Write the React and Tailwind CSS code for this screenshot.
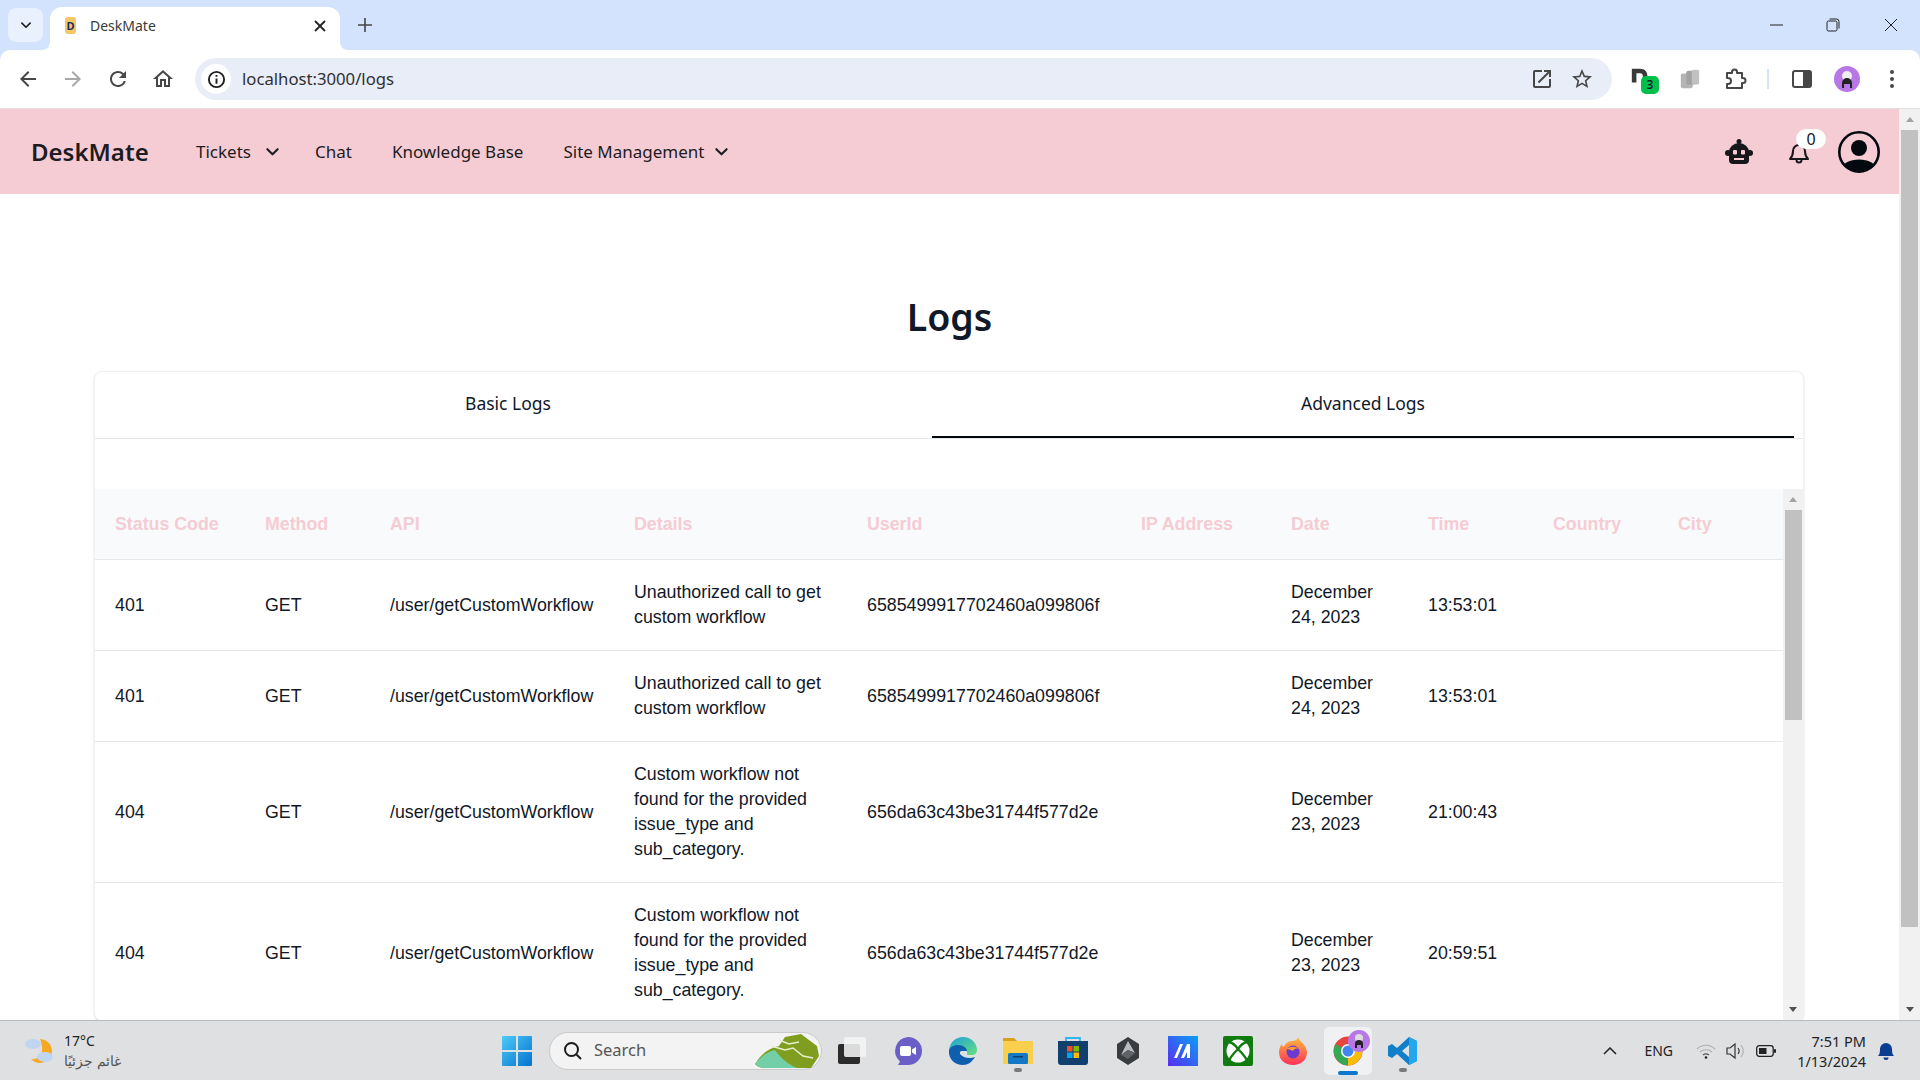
import React from "react";

const uiFont = "font-['Noto_Sans',sans-serif]";

const headers = [
  { label: "Status Code", w: "w-[150px]" },
  { label: "Method", w: "w-[125px]" },
  { label: "API", w: "w-[244px]" },
  { label: "Details", w: "w-[233px]" },
  { label: "UserId", w: "w-[274px]" },
  { label: "IP Address", w: "w-[150px]" },
  { label: "Date", w: "w-[137px]" },
  { label: "Time", w: "w-[125px]" },
  { label: "Country", w: "w-[125px]" },
  { label: "City", w: "w-[125px]" },
];

const notFound = "Custom workflow not found for the provided issue_type and sub_category.";
const unauth = "Unauthorized call to get custom workflow";

const logs = [
  { code: 401, details: unauth, user: "6585499917702460a099806f", date: "December 24, 2023", time: "13:53:01" },
  { code: 401, details: unauth, user: "6585499917702460a099806f", date: "December 24, 2023", time: "13:53:01" },
  { code: 404, details: notFound, user: "656da63c43be31744f577d2e", date: "December 23, 2023", time: "21:00:43" },
  { code: 404, details: notFound, user: "656da63c43be31744f577d2e", date: "December 23, 2023", time: "20:59:51" },
];

// Chrome toolbar glyphs
const Glyph = ({ d, className = "w-6 h-6 text-[#474747]" }) => (
  <svg viewBox="0 0 24 24" fill="currentColor" className={className}>
    <path d={d} />
  </svg>
);

const Chevron = ({ className }) => (
  <svg viewBox="0 0 16 16" fill="none" stroke="currentColor" strokeWidth="2.2" strokeLinecap="round" strokeLinejoin="round" className={className}>
    <path d="M2.500 5.500 8 11l5.500-5.500" />
  </svg>
);

const TabStrip = () => (
  <div className={`h-[50px] bg-[#d3e3fd] flex items-end pl-2 relative ${uiFont}`}>
    <div className="w-[35px] h-[34px] mb-2 rounded-lg bg-[#e9f0fe] flex items-center justify-center">
      <Chevron className="w-3 h-3 text-[#1f1f1f]" />
    </div>
    <div className="relative ml-[7px] w-[290px] h-[43px] bg-white rounded-t-xl flex items-center pl-[15px] pr-3 pb-[6px]">
      <svg viewBox="0 0 8 8" className="absolute -left-2 bottom-0 w-2 h-2"><path d="M8 0v8H0c4.400 0 8-3.600 8-8z" fill="#fff" /></svg>
      <svg viewBox="0 0 8 8" className="absolute -right-2 bottom-0 w-2 h-2"><path d="M0 0v8h8C3.600 8 0 4.400 0 0z" fill="#fff" /></svg>
      <span className="w-[11px] h-[17px] rounded-[3px] bg-[#f6c667] flex items-center justify-center text-[11px] leading-none font-bold text-[#1d2f5f]">D</span>
      <span className="ml-[14px] text-[14px] text-[#3a3a3a]">DeskMate</span>
      <svg viewBox="0 0 12 12" stroke="#222" strokeWidth="1.800" className="ml-auto mr-[2px] w-3 h-3"><path d="M1 1l10 10M11 1 1 11" /></svg>
    </div>
    <svg viewBox="0 0 14 14" stroke="#444" strokeWidth="1.600" className="w-[14px] h-[14px] ml-[18px] mb-[18px]"><path d="M7 0v14M0 7h14" /></svg>
    <div className="ml-auto flex items-center h-full pr-[22px] text-[#222]">
      <svg viewBox="0 0 14 14" stroke="currentColor" className="w-[14px] h-[14px]"><path d="M0 7h13" /></svg>
      <svg viewBox="0 0 14 14" fill="none" stroke="currentColor" className="w-[14px] h-[14px] ml-[42px]"><rect x="1" y="3" width="10" height="10" rx="1.500" /><path d="M3.500 1h7a2.500 2.500 0 0 1 2.500 2.500v7" /></svg>
      <svg viewBox="0 0 14 14" stroke="currentColor" className="w-[14px] h-[14px] ml-[44px]"><path d="M1 1l12 12M13 1 1 13" /></svg>
    </div>
  </div>
);

const Toolbar = () => (
  <div className="bg-[#d3e3fd]">
    <div className={`h-[59px] bg-white rounded-t-[10px] border-b border-[#e0e0e0] flex items-center ${uiFont}`}>
      <div className="flex items-center gap-[21px] pl-4">
        <Glyph d="M20 11H7.830l5.590-5.590L12 4l-8 8 8 8 1.410-1.410L7.830 13H20v-2z" />
        <Glyph d="M20 11H7.830l5.590-5.590L12 4l-8 8 8 8 1.410-1.410L7.830 13H20v-2z" className="w-6 h-6 text-[#a8a8a8] rotate-180" />
        <Glyph d="M17.650 6.350A7.958 7.958 0 0 0 12 4c-4.420 0-7.990 3.580-7.990 8s3.570 8 7.990 8c3.730 0 6.840-2.550 7.730-6h-2.080A5.990 5.990 0 0 1 12 18c-3.310 0-6-2.690-6-6s2.690-6 6-6c1.660 0 3.140.69 4.220 1.780L13 11h7V4l-2.350 2.350z" />
        <Glyph d="M12 5.690l5 4.500V18h-2v-6H9v6H7v-7.810l5-4.500M12 3L2 12h3v8h6v-6h2v6h6v-8h3L12 3z" />
      </div>
      <div className="ml-[20px] w-[1417px] h-[42px] rounded-full bg-[#e9edf7] flex items-center pl-[6px] pr-[18px]">
        <div className="w-[30px] h-[30px] rounded-full bg-white flex items-center justify-center">
          <svg viewBox="0 0 20 20" className="w-[19px] h-[19px]" fill="none" stroke="#1f1f1f" strokeWidth="2"><circle cx="10" cy="10" r="8" /><path d="M10 9v5.500M10 5.200v2" /></svg>
        </div>
        <span className="ml-[11px] text-[16.700px] text-[#2f3033]">localhost:3000/logs</span>
        <Glyph d="M19 19H5V5h7V3H5c-1.110 0-2 .9-2 2v14c0 1.100.89 2 2 2h14c1.100 0 2-.9 2-2v-7h-2v7zM14 3v2h3.590l-9.830 9.830 1.410 1.410L19 6.410V10h2V3h-7z" className="ml-auto w-6 h-6 text-[#474747]" />
        <Glyph d="M22 9.240l-7.190-.62L12 2 9.190 8.630 2 9.240l5.460 4.730L5.820 21 12 17.270 18.180 21l-1.630-7.030L22 9.240zM12 15.400l-3.760 2.270 1-4.280-3.320-2.880 4.380-.38L12 6.100l1.710 4.040 4.380.38-3.320 2.880 1 4.280L12 15.400z" className="ml-4 w-6 h-6 text-[#474747]" />
      </div>
      <div className="flex items-center pl-[18px]">
        <div className="relative w-[26px] h-[26px]">
          <svg viewBox="0 0 24 24" className="w-[22px] h-[22px]"><path d="M2 3h9c5 0 8 3 8 8v2h-5v-2c0-2-1-3-3-3H7v10H2z" fill="#3a3a3a" /></svg>
          <span className="absolute left-[11px] top-[10px] w-[18px] h-[18px] rounded-[5px] bg-[#00c04b] text-[12px] leading-[18px] text-center font-semibold text-[#123]">3</span>
        </div>
        <svg viewBox="0 0 24 24" className="ml-[23px] w-[22px] h-[22px]" fill="#b4b4b4"><rect x="2" y="6" width="13" height="16" rx="2" /><rect x="8" y="3" width="10" height="15" rx="2" fill="#a2a2a2" /><rect x="14" y="2" width="8" height="16" rx="2" fill="#c0c0c0" /></svg>
        <svg viewBox="0 0 24 24" fill="none" stroke="#474747" strokeWidth="2" strokeLinejoin="round" className="ml-[22px] w-6 h-6"><path d="M4 6h5V5a2.500 2.500 0 0 1 5 0v1h5v5h1a2.500 2.500 0 0 1 0 5h-1v5H4v-4h1a3 3 0 0 0 0-6H4z" /></svg>
        <div className="ml-[20px] w-[2px] h-[20px] bg-[#d3e3fd]" />
        <svg viewBox="0 0 24 24" className="ml-[21px] w-[24px] h-[24px]"><rect x="3" y="4" width="18" height="16" rx="2" fill="none" stroke="#474747" strokeWidth="2" /><path d="M13 4h6a2 2 0 0 1 2 2v12a2 2 0 0 1-2 2h-6z" fill="#474747" /></svg>
        <svg viewBox="0 0 26 26" className="ml-[20px] w-[26px] h-[26px]"><circle cx="13" cy="13" r="13" fill="#b877e6" /><circle cx="13" cy="10" r="5" fill="#eee" /><path d="M8 22v-5a5 5 0 0 1 10 0v5h-2v-4h-6v4z" fill="#222" /></svg>
        <svg viewBox="0 0 4 18" className="ml-[30px] w-[4px] h-[18px]" fill="#474747"><circle cx="2" cy="2" r="2" /><circle cx="2" cy="9" r="2" /><circle cx="2" cy="16" r="2" /></svg>
      </div>
    </div>
  </div>
);

const Navbar = () => (
  <nav className={`h-[85px] shrink-0 bg-[#f5ccd4] flex items-center pl-[31px] pr-[19px] text-[#1c1c22] ${uiFont}`}>
    <span className="text-[24px] font-semibold w-[165px]">DeskMate</span>
    <div className="flex items-center gap-[40px] text-[17px]">
      <span className="flex items-center gap-[14px] -mr-[5px]">Tickets <Chevron className="w-[15px] h-[15px]" /></span>
      <span>Chat</span>
      <span>Knowledge Base</span>
      <span className="flex items-center gap-[10px]">Site Management <Chevron className="w-[15px] h-[15px]" /></span>
    </div>
    <div className="ml-auto flex items-center">
      <svg viewBox="0 0 28 26" className="w-[28px] h-[26px]" fill="#17171b">
        <circle cx="14" cy="2.500" r="2.500" />
        <path d="M4 13a10 9 0 0 1 20 0v8a4 4 0 0 1-4 4H8a4 4 0 0 1-4-4z" />
        <circle cx="3" cy="14" r="3" />
        <circle cx="25" cy="14" r="3" />
        <rect x="8" y="11" width="4" height="4.500" rx="1" fill="#f5ccd4" />
        <rect x="16" y="11" width="4" height="4.500" rx="1" fill="#f5ccd4" />
        <rect x="9" y="19" width="10" height="2" fill="#f5ccd4" />
      </svg>
      <div className="relative ml-[36px] w-[20px] h-[28px] mt-[3px]">
        <svg viewBox="0 0 20 26" className="w-[20px] h-[26px]" fill="none" stroke="#17171b" strokeWidth="2" strokeLinejoin="round">
          <path d="M1 20c2-2 3-4 3-8a6 6 0 0 1 12 0c0 4 1 6 3 8z" />
          <path d="M7.500 21a2.500 2.500 0 0 0 5 0" />
        </svg>
        <span className="absolute left-[7px] -top-[10px] w-[30px] h-[20px] rounded-full bg-white text-[16px] leading-[20px] text-center text-[#111827]">0</span>
      </div>
      <svg viewBox="0 0 42 42" className="ml-[29px] w-[42px] h-[42px]">
        <defs>
          <clipPath id="userDisc"><circle cx="21" cy="21" r="19" /></clipPath>
        </defs>
        <circle cx="21" cy="21" r="19.700" fill="none" stroke="#03090f" strokeWidth="2.600" />
        <circle cx="21" cy="17" r="8" fill="#03090f" />
        <ellipse cx="21" cy="38" rx="17" ry="9.500" fill="#03090f" clipPath="url(#userDisc)" />
      </svg>
    </div>
  </nav>
);

const Track = ({ thumb, className = "" }) => (
  <div className={`bg-[#f1f1f1] flex flex-col items-center shrink-0 ${className}`}>
    <div className="h-[21px] flex items-center justify-center shrink-0">
      <div className="w-0 h-0 border-x-[4px] border-x-transparent border-b-[5px] border-b-[#a3a3a3]" />
    </div>
    <div className={`${thumb} bg-[#c1c1c1] shrink-0`} />
    <div className="mt-auto h-[21px] flex items-center justify-center shrink-0">
      <div className="w-0 h-0 border-x-[4px] border-x-transparent border-t-[5px] border-t-[#505050]" />
    </div>
  </div>
);

const LogsTable = () => (
  <div className="flex h-[531px] overflow-hidden">
    <table className="w-[1688px] shrink-0 table-fixed self-start border-collapse font-['Liberation_Sans',Arial,sans-serif] text-[17.800px] leading-[25px] text-[#111827]">
      <colgroup>
        {headers.map((h) => <col key={h.label} className={h.w} />)}
      </colgroup>
      <thead className="bg-[#f9fafb] border-b border-[#e5e7eb]">
        <tr>
          {headers.map((h) => (
            <th key={h.label} className="px-5 py-[22.500px] text-left font-bold text-[#f5ccd4]">{h.label}</th>
          ))}
        </tr>
      </thead>
      <tbody>
        {logs.map((row, i) => (
          <tr key={i} className="border-b border-[#e5e7eb]">
            <td className="px-5 py-5">{row.code}</td>
            <td className="px-5 py-5">GET</td>
            <td className="px-5 py-5">/user/getCustomWorkflow</td>
            <td className="px-5 py-5">{row.details}</td>
            <td className="px-5 py-5">{row.user}</td>
            <td className="px-5 py-5"></td>
            <td className="px-5 py-5">{row.date}</td>
            <td className="px-5 py-5">{row.time}</td>
            <td className="px-5 py-5"></td>
            <td className="px-5 py-5"></td>
          </tr>
        ))}
      </tbody>
    </table>
    <Track className="w-[20px] h-full" thumb="w-[17px] h-[210px]" />
  </div>
);

const Page = () => (
  <div className="flex-1 min-h-0 flex overflow-hidden">
    <div className="w-[1899px] shrink-0 flex flex-col bg-white">
      <Navbar />
      <main>
        <h1 className={`mt-[98px] h-[50px] leading-[50px] text-center text-[37.500px] font-semibold text-[#111827] ${uiFont}`}>Logs</h1>
        <div className="ml-[94px] mt-[29px] w-[1710px] rounded-lg border border-[#f1f1f1] shadow-sm bg-white">
          <div className={`flex gap-[11px] h-[67px] border-b border-[#e5e7eb] text-[17.500px] text-[#111827] ${uiFont}`}>
            <div className="w-[826px] flex items-center justify-center pb-1">Basic Logs</div>
            <div className="w-[862px] flex items-center justify-center border-b-2 border-[#03090f] pb-[2px]">Advanced Logs</div>
          </div>
          <div className="h-[50px]" />
          <LogsTable />
        </div>
      </main>
    </div>
    <Track className="w-[21px]" thumb="w-[17px] h-[797px]" />
  </div>
);

// Taskbar app icons, all drawn in a 30x30 box
const Icon = ({ children, className = "" }) => (
  <svg viewBox="0 0 30 30" className={`w-[30px] h-[30px] shrink-0 ${className}`}>{children}</svg>
);

const Dot = () => <span className="absolute left-[11px] -bottom-[6px] w-2 h-[4px] rounded-full bg-[#7a7a7a]" />;

const TaskApps = () => (
  <div className="flex items-center gap-[25px] ml-[16px]">
    <Icon>
      <rect x="0" y="8" width="22" height="20" rx="2" fill="#2b2b2b" />
      <rect x="6" y="1" width="22" height="20" rx="2" fill="#f4f4f4" fillOpacity="0.88" />
    </Icon>
    <Icon>
      <path d="M15 1a14 14 0 0 1 0 28H5l2-3.500A14 14 0 0 1 15 1z" fill="#6b5fc7" />
      <rect x="7" y="10" width="11" height="10" rx="2" fill="#fff" />
      <path d="M19 13.500l4-2.500v8l-4-2.500z" fill="#fff" />
    </Icon>
    <Icon>
      <defs>
        <linearGradient id="edgeA" x1="0" y1="0" x2="1" y2="1"><stop offset="0" stopColor="#1e9fdc" /><stop offset="1" stopColor="#66e07c" /></linearGradient>
      </defs>
      <path d="M1 14C2 6 8 1 15 1c8 0 14 6 14 13 0 3-2 5-5 5h-5c1-3-1-7-6-7-6 0-11 1-12 2z" fill="url(#edgeA)" />
      <path d="M1 14c2-4 6-5 9-5 5 0 9 3 9 6h-5c-2 0-3 2-1 4 3 3 9 4 14 2-3 5-7 8-12 8C7 29 0 23 1 14z" fill="#0f5fb0" />
    </Icon>
    <div className="relative">
      <Icon>
        <path d="M0 2h11l3 3h-14z" fill="#d9a21b" />
        <path d="M0 5h30v22a1 1 0 0 1-1 1H1a1 1 0 0 1-1-1z" fill="#fbcf4e" />
        <rect x="5" y="17" width="20" height="11" rx="1.500" fill="#1278c7" />
        <rect x="10" y="20" width="10" height="1.500" fill="#0b3f73" />
      </Icon>
      <Dot />
    </div>
    <Icon>
      <path d="M8 5V2h14v3" fill="none" stroke="#2fb6f0" strokeWidth="1.800" />
      <path d="M0 5h30v21a3 3 0 0 1-3 3H3a3 3 0 0 1-3-3z" fill="#11406f" />
      <rect x="9" y="10" width="5.500" height="5.500" fill="#f25022" />
      <rect x="15.500" y="10" width="5.500" height="5.500" fill="#7fba00" />
      <rect x="9" y="16.500" width="5.500" height="5.500" fill="#00a4ef" />
      <rect x="15.500" y="16.500" width="5.500" height="5.500" fill="#ffb900" />
    </Icon>
    <Icon>
      <path d="M15 1l11 7v14l-11 7-11-7V8z" fill="#3a3d40" />
      <path d="M15 5l7 12-7-3-7 5z" fill="#b8bcc0" />
      <path d="M8 19l7-5 7 3-7 6z" fill="#5f6266" />
    </Icon>
    <Icon>
      <defs>
        <linearGradient id="maBg" x1="0" y1="1" x2="1" y2="0"><stop offset="0" stopColor="#5a2cf0" /><stop offset="1" stopColor="#09a0f5" /></linearGradient>
      </defs>
      <rect width="30" height="30" fill="url(#maBg)" />
      <path d="M6 22l6-14h3l-6 14zM13 22l6-14h3v14h-3v-6l-3 6z" fill="#fff" />
    </Icon>
    <Icon>
      <rect width="30" height="30" rx="2" fill="#107c10" />
      <circle cx="15" cy="15" r="11.500" fill="#fff" />
      <path d="M6 6c4 1 7 4 9 7 2-3 5-6 9-7M6 25c1-4 5-8 9-12 4 4 8 8 9 12" fill="none" stroke="#107c10" strokeWidth="2.400" />
    </Icon>
    <Icon>
      <defs>
        <linearGradient id="fxA" x1="0.5" y1="0" x2="0.5" y2="1"><stop offset="0" stopColor="#ffbd3a" /><stop offset="1" stopColor="#ff2f5a" /></linearGradient>
      </defs>
      <path d="M20 1c1 4 8 7 9 15 0 8-6 13-14 13S1 24 1 16c0-3 1-6 3-8 0 2 1 3 2 3 1-4 5-6 8-6 3 0 5-1 6-4z" fill="url(#fxA)" />
      <circle cx="15" cy="16" r="6.500" fill="#6b3bd1" />
      <path d="M9 13c3-3 9-3 12 0-3-1-5 0-6 2-2-1-4-2-6-2z" fill="#ff9b2b" />
    </Icon>
    <div className="relative">
      <span className="absolute -left-[9px] -top-[9px] w-[48px] h-[48px] rounded-[5px] bg-[#f0f1f3]" />
      <Icon className="relative">
        <circle cx="15" cy="15" r="14.500" fill="#e8453c" />
        <path d="M15 15L27.500 8A14.500 14.500 0 0 1 15 29.500z" fill="#fbbc05" />
        <path d="M15 15L15 29.500A14.500 14.500 0 0 1 2.500 8z" fill="#34a853" />
        <circle cx="15" cy="15" r="7" fill="#fff" />
        <circle cx="15" cy="15" r="5.500" fill="#4285f4" />
      </Icon>
      <svg viewBox="0 0 22 22" className="absolute left-[15px] -top-[6px] w-[22px] h-[22px]">
        <circle cx="11" cy="11" r="11" fill="#b877e6" />
        <circle cx="11" cy="8" r="4" fill="#ddd" />
        <path d="M7 18v-4a4 4 0 0 1 8 0v4h-2v-3h-4v3z" fill="#222" />
      </svg>
      <span className="absolute left-[5px] -bottom-[9px] w-5 h-[4px] rounded-full bg-[#0b78d0]" />
    </div>
    <div className="relative">
      <Icon>
        <path d="M21 1l8 4v20l-8 4-12-11-5 4-4-2V10l4-2 5 4z" fill="#0f7fc9" />
        <path d="M21 1l8 4v20l-8 4z" fill="#25a7ee" />
        <path d="M21 9l-7 6 7 6z" fill="#dfe0e2" />
      </Icon>
      <Dot />
    </div>
  </div>
);

const Taskbar = () => (
  <footer className={`h-[60px] shrink-0 bg-[#dfe0e2] border-t border-[#b9babc] flex items-center ${uiFont}`}>
    <svg viewBox="0 0 30 30" className="ml-[25px] w-[30px] h-[30px] shrink-0">
      <path d="M15 3a12 12 0 1 1-9 20c7 1 12-4 11-12-.2-3-1-6-2-8z" fill="#f6a821" />
      <ellipse cx="8" cy="8" rx="8" ry="5" fill="#c0d6f0" />
      <ellipse cx="20" cy="21" rx="8" ry="5" fill="#c0d6f0" />
    </svg>
    <div className="ml-[9px] w-[100px] text-[14px] leading-[20px] text-[#222]">
      <div>17°C</div>
      <div className="text-[#555]">غائم جزئيًا</div>
    </div>
    <svg viewBox="0 0 30 30" className="ml-[338px] w-[30px] h-[30px] shrink-0">
      <defs>
        <linearGradient id="winA" x1="0" y1="0" x2="1" y2="1"><stop offset="0" stopColor="#4fcaf8" /><stop offset="1" stopColor="#0472cf" /></linearGradient>
      </defs>
      <path d="M0 1a1 1 0 0 1 1-1h13v14H0zM16 0h13a1 1 0 0 1 1 1v13H16zM0 16h14v14H1a1 1 0 0 1-1-1zM16 16h14v13a1 1 0 0 1-1 1H16z" fill="url(#winA)" />
    </svg>
    <div className="ml-[17px] w-[273px] h-[38px] rounded-full bg-[#f3f3f3] border border-[#c9cacc] flex items-center pl-[13px] relative shrink-0">
      <svg viewBox="0 0 20 20" className="w-5 h-5" fill="none" stroke="#1c1c1c" strokeWidth="2"><circle cx="8.500" cy="8.500" r="6.500" /><path d="M13.500 13.500 18 18" /></svg>
      <span className="ml-[11px] text-[16.500px] text-[#555]">Search</span>
      <svg viewBox="0 0 64 34" className="ml-auto mr-[2px] w-[64px] h-[34px]">
        <path d="M0 30C6 20 14 14 24 12L30 3l16-3 16 12 2 10-8 12H12C6 34 2 33 0 30z" fill="#7f9e1f" />
        <path d="M0 30C6 22 12 18 20 16c4 6 12 14 22 18H12C6 34 2 33 0 30z" fill="#72cfa8" />
        <path d="M16 12l14 4 8-2 10 8 10 2M24 6l10 4 10-2" fill="none" stroke="#e8efd0" strokeWidth="1.500" />
      </svg>
    </div>
    <TaskApps />
    <div className="ml-auto flex items-center pr-[26px] text-[#222]">
      <svg viewBox="0 0 14 8" fill="none" stroke="#222" strokeWidth="1.500" className="w-[14px] h-2"><path d="M1 7l6-6 6 6" /></svg>
      <span className="ml-[27px] text-[14px]">ENG</span>
      <svg viewBox="0 0 20 16" fill="none" stroke="#b0b0b0" strokeWidth="1.200" className="ml-[23px] w-5 h-4">
        <path d="M1 6c5-5 13-5 18 0M4 9c3-3 9-3 12 0" />
        <path d="M7 12c2-1.500 4-1.500 6 0" stroke="#555" />
        <circle cx="10" cy="14.500" r="1.300" fill="#222" stroke="none" />
      </svg>
      <svg viewBox="0 0 20 18" fill="none" stroke="#333" strokeWidth="1.200" className="ml-[10px] w-5 h-[18px]">
        <path d="M1 6h3l5-4v14l-5-4H1z" />
        <path d="M12 6c1.500 2 1.500 4 0 6" />
        <path d="M15 3c3 4 3 8 0 12" stroke="#b0b0b0" />
      </svg>
      <svg viewBox="0 0 20 12" className="ml-[10px] w-5 h-3">
        <rect x="0.700" y="0.700" width="16.500" height="10.600" rx="2.500" fill="none" stroke="#222" strokeWidth="1.300" />
        <rect x="3" y="3" width="7.500" height="6" fill="#222" />
        <rect x="18" y="4" width="2" height="4" rx="1" fill="#222" />
      </svg>
      <div className="ml-[14px] w-[76px] text-right text-[14.500px] leading-[20px] whitespace-nowrap flex flex-col items-end">
        <span>7:51 PM</span>
        <span>1/13/2024</span>
      </div>
      <svg viewBox="0 0 16 18" fill="#0a3d91" className="ml-[12px] w-4 h-[18px]">
        <path d="M0 14c1.500-1.500 2-3 2-7a6 6 0 0 1 12 0c0 4 .5 5.500 2 7z" />
        <path d="M5.500 15.500h5a2.500 2.500 0 0 1-5 0z" />
      </svg>
    </div>
  </footer>
);

export default function App() {
  return (
    <div className="w-[1920px] h-[1080px] overflow-hidden flex flex-col">
      <TabStrip />
      <Toolbar />
      <Page />
      <Taskbar />
    </div>
  );
}
